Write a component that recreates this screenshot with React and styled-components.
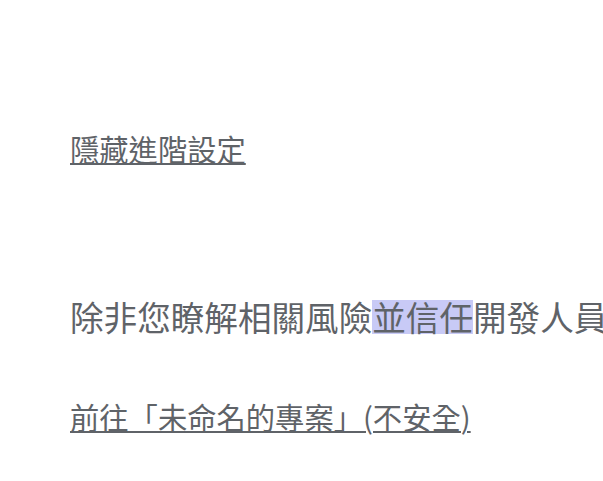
import React from "react";
import styled, { createGlobalStyle } from "styled-components";

const Global = createGlobalStyle`
  html, body { margin: 0; padding: 0; background: #fff; }
  body { overflow: hidden; }
`;

const Page = styled.div`
  width: 603px;
  height: 481px;
  overflow: hidden;
  box-sizing: border-box;
  padding: 126px 0 0 70px;
  font-family: "Noto Sans CJK TC", "Noto Sans", sans-serif;
  color: #5f6368;
  display: flex;
  flex-direction: column;
  align-items: flex-start;
  white-space: nowrap;
`;

const LinkText = styled.a`
  font-size: 29.3px;
  line-height: 44px;
  color: #5f6368;
  text-decoration: underline;
  text-decoration-thickness: 2px;
  text-underline-offset: 2px;
  cursor: pointer;
`;

const Paragraph = styled.p`
  margin: ${(p) => p.$top}px 0 0;
  font-size: 33.6px;
  line-height: 48px;
`;

const Highlight = styled.span`
  display: inline-block;
  line-height: 34px;
  background: #c8caf6;
`;

export default function App() {
  return (
    <>
      <Global />
      <Page>
        <LinkText>隱藏進階設定</LinkText>
        <Paragraph $top={123}>
          除非您瞭解相關風險<Highlight>並信任</Highlight>開發人員，否則請勿前往這個網站。
        </Paragraph>
        <Paragraph $top={50} as="div">
          <LinkText>前往「未命名的專案」(不安全)</LinkText>
        </Paragraph>
      </Page>
    </>
  );
}
